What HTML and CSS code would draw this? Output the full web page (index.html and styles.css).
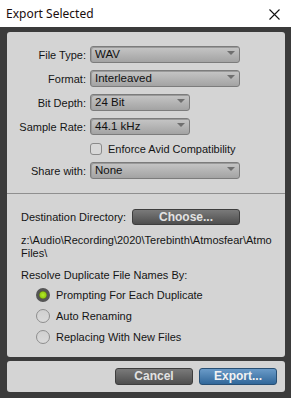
FILE: index.html
```html
<!DOCTYPE html>
<html lang="en">
<head>
  <meta charset="UTF-8">
  <title>Export Selected</title>
  <link rel="stylesheet" href="styles.css">
</head>
<body>
  <!-- Title bar -->
  <div class="titlebar">
    <span class="title">Export Selected</span>
    <svg class="close" width="11" height="11" viewBox="0 0 11 11">
      <path d="M0.5 0.5 L10.5 10.5 M10.5 0.5 L0.5 10.5" stroke="#111" stroke-width="1.1" fill="none"/>
    </svg>
  </div>

  <div class="window">
    <!-- Main settings panel -->
    <div class="panel main">
      <div class="settings">
        <span class="label">File Type:</span>
        <div class="select wide">WAV</div>

        <span class="label">Format:</span>
        <div class="select wide">Interleaved</div>

        <span class="label">Bit Depth:</span>
        <div class="select narrow">24 Bit</div>

        <span class="label">Sample Rate:</span>
        <div class="select narrow">44.1 kHz</div>

        <span class="label"></span>
        <div class="check-row">
          <span class="checkbox"></span>
          <span>Enforce Avid Compatibility</span>
        </div>

        <span class="label">Share with:</span>
        <div class="select wide">None</div>
      </div>

      <div class="destination">
        <div class="dest-row">
          <span class="dest-label">Destination Directory:</span>
          <button class="btn btn-dark choose">Choose...</button>
        </div>
        <div class="path">z:\Audio\Recording\2020\Terebinth\Atmosfear\Atmo<br>Files\</div>
        <div class="resolve">Resolve Duplicate File Names By:</div>
        <div class="radios">
          <div class="radio-row"><span class="radio on"></span>Prompting For Each Duplicate</div>
          <div class="radio-row"><span class="radio"></span>Auto Renaming</div>
          <div class="radio-row"><span class="radio"></span>Replacing With New Files</div>
        </div>
      </div>
    </div>

    <!-- Footer buttons -->
    <div class="panel footer">
      <button class="btn btn-dark">Cancel</button>
      <button class="btn btn-blue">Export...</button>
    </div>
  </div>
</body>
</html>
```

FILE: styles.css
```css
body {
  margin: 0;
  width: 291px;
  height: 398px;
  overflow: hidden;
  background-color: #3b3b3b;
  font-family: "Liberation Sans", Arial, sans-serif;
  font-size: 11px;
  color: #141414;
}

/* Title bar */
.titlebar {
  height: 27px;
  background-color: #ffffff;
  display: flex;
  align-items: center;
  justify-content: space-between;
  padding: 0 11px 0 6px;
}

.title {
  font-family: "Noto Sans", "Open Sans", sans-serif;
  font-size: 12px;
  color: #1a0d0d;
}

.close {
  margin-top: 1px;
}

/* Window body */
.window {
  padding: 5px 6px 0 7px;
  display: flex;
  flex-direction: column;
  gap: 4px;
}

.panel {
  background-color: #d4d4d4;
  border-radius: 3px;
}

.main {
  height: 325px;
}

/* Settings grid */
.settings {
  display: grid;
  grid-template-columns: 79px auto;
  column-gap: 4px;
  row-gap: 7px;
  align-items: center;
  padding: 14px 0;
  border-bottom: 1px solid #8f8f8f;
}

.label {
  text-align: right;
}

.select {
  position: relative;
  box-sizing: border-box;
  height: 17px;
  line-height: 15px;
  padding-left: 4px;
  border: 1px solid #7c7c7c;
  border-radius: 3px;
  background: linear-gradient(#c6c6c6, #a3a3a3);
  box-shadow: inset 1px 1px 0 #9a9a9a;
  font-size: 11.5px;
  color: #111;
}

.select::after {
  content: "";
  position: absolute;
  right: 4px;
  top: 4px;
  border-left: 4px solid transparent;
  border-right: 4px solid transparent;
  border-top: 4px solid #6f6f6f;
}

.wide {
  width: 150px;
}

.narrow {
  width: 100px;
}

.check-row {
  display: flex;
  align-items: center;
  gap: 6px;
  height: 13px;
}

.checkbox {
  box-sizing: border-box;
  width: 12px;
  height: 12px;
  border: 1px solid #8a8a8a;
  border-radius: 3px;
  background-color: #d8d8d8;
}

/* Destination section */
.destination {
  padding: 15px 14px 0 14px;
}

.dest-row {
  display: flex;
  align-items: center;
  height: 16px;
}

.dest-label {
  width: 111px;
}

.path {
  margin-top: 9px;
  line-height: 13px;
}

.resolve {
  margin-top: 9px;
  line-height: 13px;
}

.radios {
  margin-top: 6px;
  padding-left: 15px;
  display: flex;
  flex-direction: column;
  gap: 7px;
}

.radio-row {
  display: flex;
  align-items: center;
  gap: 6px;
  height: 14px;
}

.radio {
  box-sizing: border-box;
  width: 14px;
  height: 14px;
  border-radius: 50%;
  border: 1px solid #8e8e8e;
  background: linear-gradient(#d0d0d0, #dadada);
}

.radio.on {
  border: 3px solid #555;
  background: radial-gradient(circle, #b6ec2a 0, #94cc12 3px, #5a6a20 4px);
}

/* Buttons */
.btn {
  box-sizing: border-box;
  height: 17px;
  padding: 0;
  border-radius: 3px;
  font-family: "Liberation Sans", Arial, sans-serif;
  font-size: 12px;
  font-weight: bold;
  line-height: 15px;
  cursor: pointer;
}

.btn-dark {
  width: 78px;
  border: 1px solid #3e3e3e;
  background: linear-gradient(#7a7a7a, #4e4e4e);
  color: #e2e2e2;
}

.choose {
  width: 108px;
  height: 16px;
  line-height: 14px;
}

.btn-blue {
  width: 78px;
  border: 1px solid #274f74;
  background: linear-gradient(#6a9bc8, #31679a);
  color: #f2f2f2;
}

.footer {
  height: 31px;
  box-sizing: border-box;
  display: flex;
  justify-content: flex-end;
  align-items: flex-start;
  gap: 6px;
  padding: 7px 8px 0 0;
}
```
